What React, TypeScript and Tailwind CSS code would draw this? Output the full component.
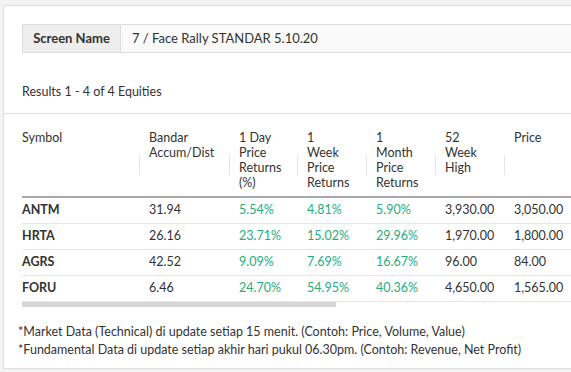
const cols = 'grid grid-cols-[117px_90px_68px_69px_69px_69px_80px]'

const headers = [
  ['Symbol'],
  ['Bandar', 'Accum/Dist'],
  ['1 Day', 'Price', 'Returns', '(%)'],
  ['1', 'Week', 'Price', 'Returns'],
  ['1', 'Month', 'Price', 'Returns'],
  ['52', 'Week', 'High'],
  ['Price'],
]

const rows = [
  ['ANTM', '31.94', '5.54%', '4.81%', '5.90%', '3,930.00', '3,050.00'],
  ['HRTA', '26.16', '23.71%', '15.02%', '29.96%', '1,970.00', '1,800.00'],
  ['AGRS', '42.52', '9.09%', '7.69%', '16.67%', '96.00', '84.00'],
  ['FORU', '6.46', '24.70%', '54.95%', '40.36%', '4,650.00', '1,565.00'],
]

export default function App() {
  return (
    <div className="h-[372px] overflow-hidden bg-[#f3f3f3] pl-[3px] pt-[5px] font-['Lato',sans-serif] text-[#333]">
      <div className="h-[364px] w-[620px] border border-r-0 border-[#dedede] bg-white">
        {/* Screen name */}
        <div className="mt-[18px] ml-[18px] flex h-[29px] border border-r-0 border-[#ddd] text-[13px]">
          <div className="flex w-[98px] items-center justify-center border-r border-[#ddd] bg-[#eeeeee] font-bold">
            Screen Name
          </div>
          <div className="flex flex-1 items-center bg-[#fafafa] pl-[11px]">7 / Face Rally STANDAR 5.10.20</div>
        </div>

        <div className="mt-[31px] ml-[18px] text-[12.5px] leading-[16px]">Results 1 - 4 of 4 Equities</div>

        <div className="mt-[13px] border-t border-[#e2e2e2]" />

        {/* Table */}
        <div className="ml-[18px] text-[12.5px]">
          <div className={`${cols} h-[84px] border-b-2 border-[#a9a9a9] pt-[16px] leading-[15px]`}>
            {headers.map((h, i) => (
              <div key={i} className={`relative ${i === 0 ? '' : 'pl-[10px]'}`}>
                {i > 0 && <span className="absolute left-0 top-[25px] h-[20px] w-px bg-[#e4e4e4]" />}
                {h.map((t) => (
                  <div key={t + i}>{t}</div>
                ))}
              </div>
            ))}
          </div>
          {rows.map((r) => (
            <div key={r[0]} className={`${cols} h-[26px] items-center border-b border-[#e8e8e8]`}>
              {r.map((c, i) => (
                <div
                  key={i}
                  className={`${i === 0 ? 'font-bold' : 'pl-[10px]'} ${i >= 2 && i <= 4 ? 'text-[#26ad7c]' : ''}`}
                >
                  {c}
                </div>
              ))}
            </div>
          ))}
          {/* scrollbar */}
          <div className="h-[5px] w-[314px] bg-[#d6d6d6]" />
        </div>

        <div className="mt-[16px] ml-[14px] text-[12.5px] leading-[18px]">
          <div>*Market Data (Technical) di update setiap 15 menit. (Contoh: Price, Volume, Value)</div>
          <div>*Fundamental Data di update setiap akhir hari pukul 06.30pm. (Contoh: Revenue, Net Profit)</div>
        </div>
      </div>
    </div>
  )
}
